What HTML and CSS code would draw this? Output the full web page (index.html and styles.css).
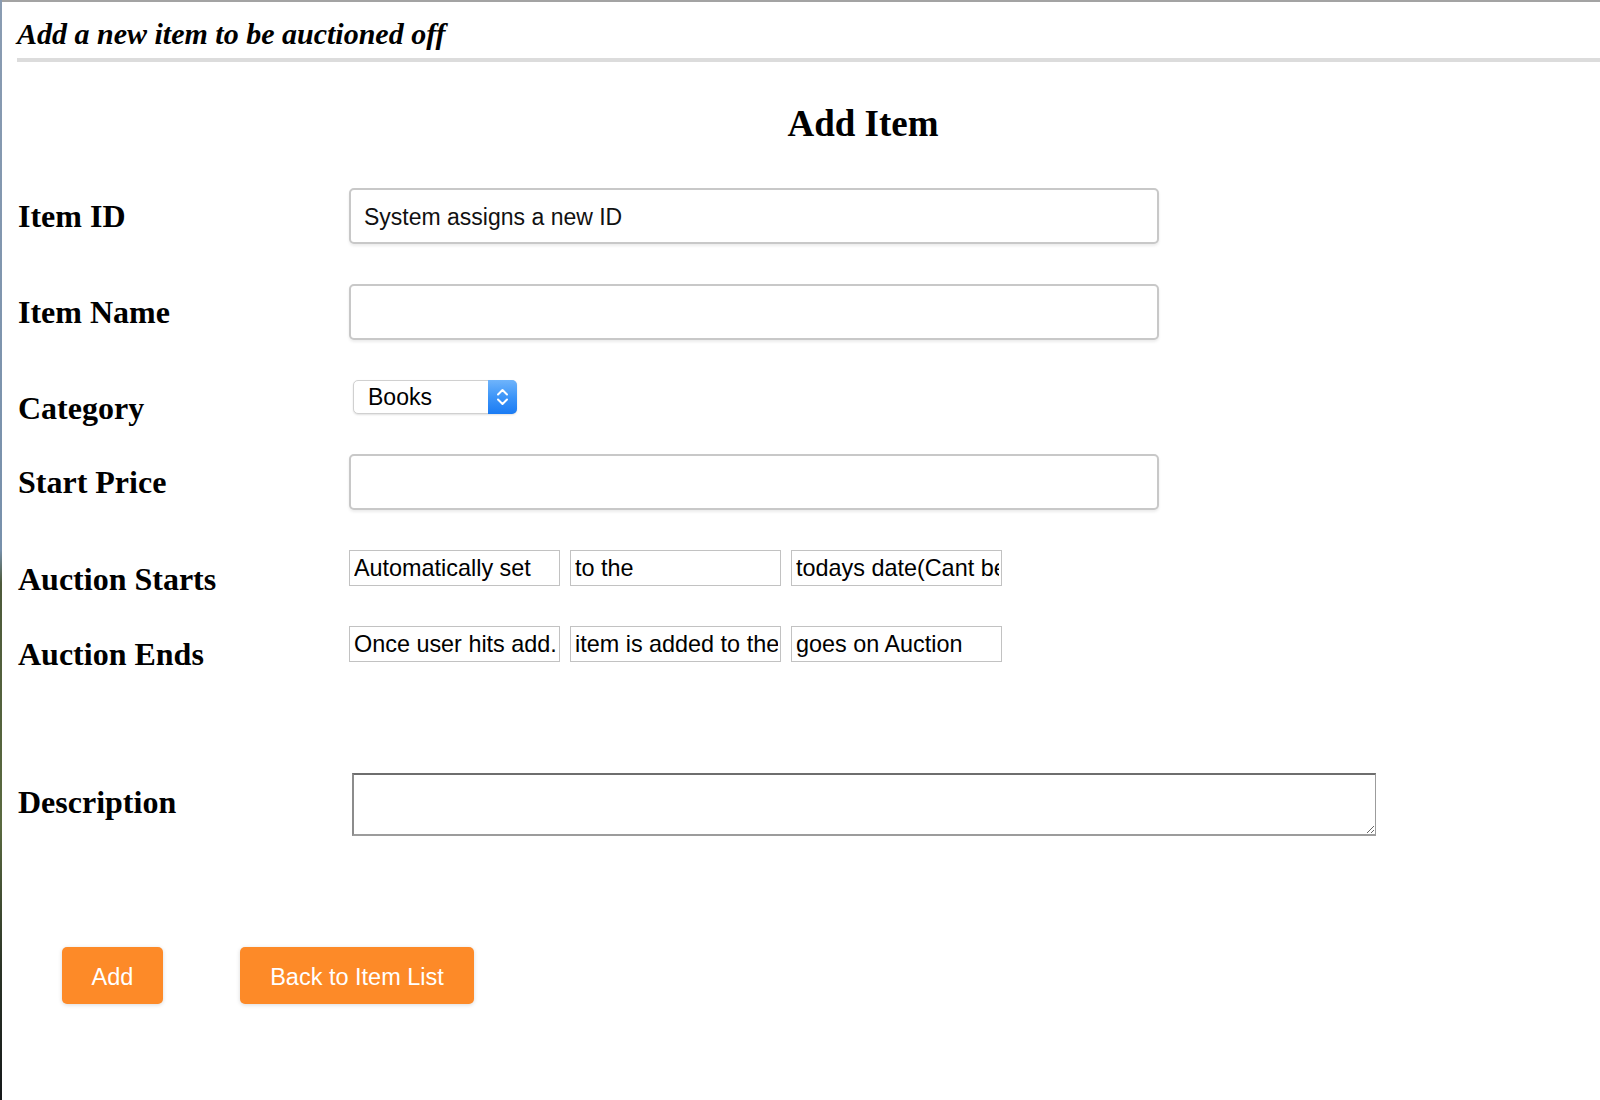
FILE: index.html
```html
<!DOCTYPE html>
<html lang="en">
<head>
<meta charset="utf-8">
<title>Add Item</title>
<link rel="stylesheet" href="styles.css">
</head>
<body>
<div class="page">
  <div class="topbar"></div>
  <div class="content">
    <h1 class="title">Add a new item to be auctioned off</h1>
    <div class="rule"></div>
    <h2 class="form-heading">Add Item</h2>
    <form class="item-form">
      <div class="row row-id">
        <label class="field-label">Item ID</label>
        <input class="text-input" type="text" value="System assigns a new ID">
      </div>
      <div class="row row-name">
        <label class="field-label">Item Name</label>
        <input class="text-input" type="text" value="">
      </div>
      <div class="row row-category">
        <label class="field-label label-offset-8">Category</label>
        <span class="select-wrap">
          <select class="select">
            <option>Books</option>
          </select>
          <span class="select-arrow">
            <svg width="29" height="34" viewBox="0 0 29 34" aria-hidden="true">
              <path d="M10 14.5 L14.5 10 L19 14.5" fill="none" stroke="#fff" stroke-width="2" stroke-linecap="round" stroke-linejoin="round"/>
              <path d="M10 19.5 L14.5 24 L19 19.5" fill="none" stroke="#fff" stroke-width="2" stroke-linecap="round" stroke-linejoin="round"/>
            </svg>
          </span>
        </span>
      </div>
      <div class="row row-price">
        <label class="field-label">Start Price</label>
        <input class="text-input" type="text" value="">
      </div>
      <div class="row row-starts">
        <label class="field-label label-offset-9">Auction Starts</label>
        <div class="small-group">
          <input class="small-input" type="text" value="Automatically set">
          <input class="small-input" type="text" value="to the">
          <input class="small-input" type="text" value="todays date(Cant be changed)">
        </div>
      </div>
      <div class="row row-ends">
        <label class="field-label label-offset-8">Auction Ends</label>
        <div class="small-group">
          <input class="small-input" type="text" value="Once user hits add.">
          <input class="small-input" type="text" value="item is added to the list">
          <input class="small-input" type="text" value="goes on Auction">
        </div>
      </div>
      <div class="row row-desc">
        <label class="field-label label-offset-9">Description</label>
        <textarea class="desc"></textarea>
      </div>
      <div class="buttons">
        <button type="button" class="btn btn-add">Add</button>
        <button type="button" class="btn btn-back">Back to Item List</button>
      </div>
    </form>
  </div>
</div>
</body>
</html>
```
FILE: styles.css
```css
html, body {
  margin: 0;
  padding: 0;
  background: #ffffff;
}

.page {
  min-height: 1100px;
  box-sizing: border-box;
  border-left: 2px solid #7790ab;
  border-image: linear-gradient(to bottom, #8a9cb2 0%, #7790ab 50%, #4d5a3a 53%, #5a6a40 75%, #2a3326 88%, #15181a 100%) 1;
}

.topbar {
  height: 2px;
  background: #a3a3a3;
}

.content {
  padding-left: 15px;
}

.title {
  margin: 14px 0 0;
  font-family: "Liberation Serif", "Times New Roman", serif;
  font-size: 30px;
  line-height: 36px;
  font-weight: bold;
  font-style: italic;
  color: #000;
}

.rule {
  margin-top: 6px;
  height: 4px;
  background: #dcdcdc;
}

.form-heading {
  margin: 41px 0 0;
  padding-left: 109px;
  text-align: center;
  font-family: "Liberation Serif", "Times New Roman", serif;
  font-size: 37px;
  line-height: 42px;
  font-weight: bold;
  color: #000;
}

.item-form {
  margin: 0;
}

.row {
  display: flex;
  align-items: center;
}

.row-id { margin-top: 43px; }
.row-name { margin-top: 40px; }
.row-category { margin-top: 40px; align-items: flex-start; }
.row-price { margin-top: 26px; }
.row-starts { margin-top: 40px; align-items: flex-start; }
.row-ends { margin-top: 27px; align-items: flex-start; }
.row-desc { margin-top: 99px; align-items: flex-start; }

.field-label {
  flex: 0 0 332px;
  padding-left: 1px;
  box-sizing: border-box;
  font-family: "Liberation Serif", "Times New Roman", serif;
  font-size: 32px;
  line-height: 40px;
  font-weight: bold;
  color: #000;
}

.label-offset-7 { margin-top: 7px; }
.label-offset-8 { margin-top: 8px; }
.label-offset-9 { margin-top: 9px; }

.text-input {
  width: 810px;
  height: 56px;
  box-sizing: border-box;
  margin: 0;
  padding: 2px 13px 0;
  border: 2px solid #c8c8c8;
  border-radius: 5px;
  box-shadow: 0 2px 3px rgba(0, 0, 0, 0.08);
  font-family: "Liberation Sans", Arial, sans-serif;
  font-size: 23px;
  color: #111;
  background: #fff;
  outline: none;
}

.select-wrap {
  position: relative;
  display: inline-block;
  margin-left: 4px;
  width: 164px;
  height: 34px;
}

.select {
  -webkit-appearance: none;
  appearance: none;
  width: 164px;
  height: 34px;
  box-sizing: border-box;
  margin: 0;
  padding: 0 0 0 14px;
  border: 1px solid #d0d0d0;
  border-radius: 5px;
  background: #fff;
  box-shadow: 0 1px 2px rgba(0, 0, 0, 0.12);
  font-family: "Liberation Sans", Arial, sans-serif;
  font-size: 23px;
  color: #000;
  outline: none;
}

.select-arrow {
  position: absolute;
  top: 0;
  right: 0;
  width: 29px;
  height: 34px;
  border-radius: 0 5px 5px 0;
  background: linear-gradient(to bottom, #6fb4fb 0%, #3d95f8 50%, #1a7bf4 100%);
  pointer-events: none;
}

.select-arrow svg {
  display: block;
}

.small-group {
  display: flex;
  gap: 10px;
}

.small-input {
  width: 211px;
  height: 36px;
  box-sizing: border-box;
  margin: 0;
  padding: 1px 2px 0 4px;
  border: 1px solid #c2c2c2;
  border-radius: 0;
  font-family: "Liberation Sans", Arial, sans-serif;
  font-size: 23.4px;
  color: #000;
  background: #fff;
  outline: none;
}

.desc {
  width: 1024px;
  height: 63px;
  box-sizing: border-box;
  margin: 0 0 0 3px;
  padding: 2px;
  border-style: solid;
  border-width: 2px 1px 2px 2px;
  border-color: #6e6e6e #9c9c9c #9c9c9c #8c8c8c;
  border-radius: 0;
  resize: both;
  font-family: "Liberation Mono", monospace;
  font-size: 16px;
  background: #fff;
  outline: none;
}

.buttons {
  display: flex;
  gap: 77px;
  margin-top: 111px;
  padding-left: 45px;
}

.btn {
  height: 57px;
  margin: 0;
  padding: 3px 0 0;
  border: none;
  border-radius: 5px;
  background: #fd8a28;
  color: #fff;
  font-family: "Liberation Sans", Arial, sans-serif;
  font-size: 23.5px;
  box-shadow: 0 1px 4px rgba(0, 0, 0, 0.15);
  cursor: pointer;
}

.btn-add { width: 101px; }
.btn-back { width: 234px; }
```
